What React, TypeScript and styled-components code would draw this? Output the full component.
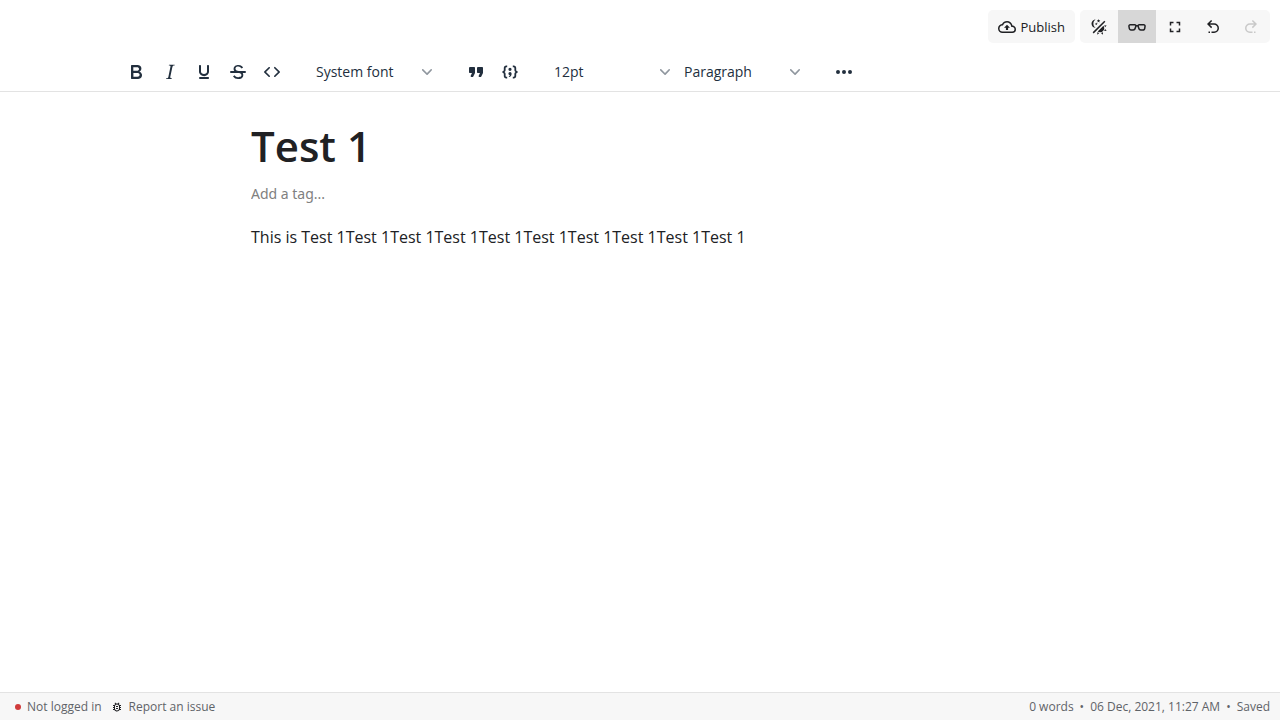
import React, { useState } from "react";
import styled, { createGlobalStyle } from "styled-components";

const GlobalStyle = createGlobalStyle`
  *, *::before, *::after { box-sizing: border-box; }
  body {
    margin: 0;
    background: #ffffff;
    color: #202124;
    font-family: "Open Sans", "Noto Sans", sans-serif;
  }
  button, input, select { font: inherit; color: inherit; margin: 0; }
`;

const paths = {
  cloudUpload:
    "M19.35,10.04C18.67,6.59 15.64,4 12,4C9.11,4 6.61,5.64 5.36,8.04C2.35,8.36 0,10.9 0,14A6,6 0 0,0 6,20H19A5,5 0 0,0 24,15C24,12.36 21.95,10.22 19.35,10.04M19,18H6A4,4 0 0,1 2,14C2,11.95 3.53,10.24 5.56,10.03L6.63,9.92L7.13,8.97C8.08,7.14 9.94,6 12,6C14.62,6 16.88,7.86 17.39,10.43L17.69,11.93L19.22,12.04C20.78,12.14 22,13.45 22,15A3,3 0 0,1 19,18M8,13H10.55V16H13.45V13H16L12,9L8,13Z",
  theme:
    "M7.5,2C5.71,3.15 4.5,5.18 4.5,7.5C4.5,9.82 5.71,11.85 7.53,13C4.46,13 2,10.54 2,7.5A5.5,5.5 0 0,1 7.5,2M19.07,3.5L20.5,4.93L4.93,20.5L3.5,19.07L19.07,3.5M12.89,5.93L11.41,5L9.97,6L10.39,4.3L9,3.24L10.75,3.12L11.33,1.47L12,3.1L13.73,3.13L12.38,4.26L12.89,5.93M9.59,9.54L8.43,8.81L7.31,9.59L7.65,8.27L6.56,7.44L7.92,7.35L8.37,6.06L8.88,7.33L10.24,7.36L9.19,8.23L9.59,9.54M19,13.5A5.5,5.5 0 0,1 13.5,19C12.28,19 11.15,18.6 10.24,17.93L17.93,10.24C18.6,11.15 19,12.28 19,13.5M14.6,20.08L17.37,18.93L17.13,22.28L14.6,20.08M18.93,17.38L20.08,14.61L22.28,17.15L18.93,17.38M20.08,12.42L18.94,9.64L22.28,9.88L20.08,12.42M9.63,18.93L12.4,20.08L9.87,22.27L9.63,18.93Z",
  glasses:
    "M3,10C2.76,10 2.55,10.09 2.41,10.25C2.27,10.4 2.21,10.62 2.24,10.86L2.74,13.85C2.82,14.5 3.4,15 4,15H7C7.64,15 8.36,14.44 8.5,13.82L9.56,10.63C9.6,10.5 9.57,10.31 9.5,10.19C9.39,10.07 9.22,10 9,10H3M7,17H4C2.38,17 0.96,15.74 0.76,14.14L0.26,11.15C0.15,10.3 0.39,9.5 0.91,8.92C1.43,8.34 2.19,8 3,8H9C9.83,8 10.58,8.35 11.06,8.96C11.17,9.11 11.27,9.27 11.35,9.45C11.78,9.36 12.22,9.36 12.64,9.45C12.72,9.27 12.82,9.11 12.94,8.96C13.41,8.35 14.16,8 15,8H21C21.81,8 22.57,8.34 23.09,8.92C23.6,9.5 23.84,10.3 23.74,11.11L23.23,14.18C23.04,15.74 21.61,17 20,17H17C15.44,17 13.92,15.81 13.54,14.3L12.64,11.59C12.26,11.31 11.73,11.31 11.35,11.59L10.43,14.37C10.07,15.82 8.56,17 7,17M15,10C14.78,10 14.61,10.07 14.5,10.19C14.42,10.31 14.4,10.5 14.45,10.7L15.46,13.75C15.64,14.44 16.36,15 17,15H20C20.59,15 21.18,14.5 21.25,13.89L21.76,10.82C21.79,10.62 21.73,10.4 21.59,10.25C21.45,10.09 21.24,10 21,10H15Z",
  fullscreen:
    "M5,5H10V7H7V10H5V5M14,5H19V10H17V7H14V5M17,14H19V19H14V17H17V14M10,17V19H5V14H7V17H10Z",
  undo:
    "M13.5,7A6.5,6.5 0 0,1 20,13.5A6.5,6.5 0 0,1 13.5,20H10V18H13.5C16,18 18,16 18,13.5C18,11 16,9 13.5,9H7.83L10.91,12.09L9.5,13.5L4,8L9.5,2.5L10.92,3.91L7.83,7H13.5M6,18H8V20H6V18Z",
  redo:
    "M10.5,7A6.5,6.5 0 0,0 4,13.5A6.5,6.5 0 0,0 10.5,20H14V18H10.5C8,18 6,16 6,13.5C6,11 8,9 10.5,9H16.17L13.09,12.09L14.5,13.5L20,8L14.5,2.5L13.08,3.91L16.17,7H10.5M18,18H16V20H18V18Z",
  bug:
    "M20 8H17.19C16.74 7.2 16.12 6.5 15.37 6L17 4.41L15.59 3L13.42 5.17C12.96 5.06 12.49 5 12 5S11.05 5.06 10.59 5.17L8.41 3L7 4.41L8.62 6C7.87 6.5 7.26 7.21 6.81 8H4V10H6.09C6.03 10.33 6 10.66 6 11V12H4V14H6V15C6 15.34 6.03 15.67 6.09 16H4V18H6.81C8.47 20.87 12.14 21.84 15 20.18C15.91 19.66 16.67 18.9 17.19 18H20V16H17.91C17.97 15.67 18 15.34 18 15V14H20V12H18V11C18 10.66 17.97 10.33 17.91 10H20V8M16 15C16 17.21 14.21 19 12 19S8 17.21 8 15V11C8 8.79 9.79 7 12 7S16 8.79 16 11V15M14 10V12H10V10H14M10 14H14V16H10V14Z",
  bold:
    "M7.8 19c-.3 0-.5 0-.6-.2l-.2-.5V5.7c0-.2 0-.4.2-.5l.6-.2h5c1.5 0 2.7.3 3.5 1 .7.6 1.1 1.4 1.1 2.5a3 3 0 01-.6 1.9c-.4.6-1 1-1.6 1.2.4.1.9.3 1.3.6s.8.7 1 1.2c.4.4.5 1 .5 1.6 0 1.3-.4 2.3-1.3 3-.8.7-2.1 1-3.8 1H7.8zm5-8.3c.6 0 1.2-.1 1.6-.5.4-.3.6-.7.6-1.3 0-1.1-.8-1.7-2.3-1.7H9.3v3.5h3.4zm.5 6c.7 0 1.3-.1 1.7-.4.4-.4.6-.9.6-1.5s-.2-1-.7-1.4c-.4-.3-1-.4-2-.4H9.4v3.8h4z",
  italic:
    "M16.7 4.7l-.1.9h-.3c-.6 0-1 0-1.4.3-.3.3-.4.6-.5 1.1l-2.1 9.8v.6c0 .5.4.8 1.4.8h.2l-.2.8H8l.2-.8h.2c1.1 0 1.8-.5 2-1.5l2-9.8.1-.5c0-.6-.4-.8-1.4-.8h-.3l.2-.9h5.8z",
  underline:
    "M16 5c.6 0 1 .4 1 1v5.5a4 4 0 01-.4 1.8l-1 1.4a5.3 5.3 0 01-5.5 1 5 5 0 01-1.6-1c-.5-.4-.8-.9-1.1-1.4a4 4 0 01-.4-1.8V6c0-.6.4-1 1-1s1 .4 1 1v5.5c0 .3 0 .6.2 1l.6.7a3.3 3.3 0 002.2.8 3.4 3.4 0 002.2-.8c.3-.2.4-.5.6-.8l.2-.9V6c0-.6.4-1 1-1zM8 17h8c.6 0 1 .4 1 1s-.4 1-1 1H8a1 1 0 010-2z",
  strike:
    "M15.6 8.5c-.5-.7-1-1.1-1.3-1.3-.6-.4-1.3-.6-2-.6-2.7 0-2.8 1.7-2.8 2.1 0 1.6 1.8 2 3.2 2.3 4.4.9 4.6 2.8 4.6 3.9 0 1.4-.7 4.1-5 4.1A6.2 6.2 0 017 16.4l1.5-1.1c.4.6 1.6 2 3.7 2 1.6 0 2.5-.4 3-1.2.4-.8.3-2-.8-2.6-.7-.4-1.6-.7-2.9-1-1-.2-3.9-.8-3.9-3.6C7.6 6 10.3 5 12.4 5c2.9 0 4.2 1.6 4.7 2.4l-1.5 1.1zM5 11h14a1 1 0 010 2H5a1 1 0 010-2z",
  code:
    "M9.8 15.7c.3.3.3.8 0 1-.3.4-.9.4-1.2 0l-4.4-4.1a.8.8 0 010-1.2l4.4-4.2c.3-.3.9-.3 1.2 0 .3.3.3.8 0 1.1L6 12l3.8 3.7zM14.2 15.7c-.3.3-.3.8 0 1 .4.4.9.4 1.2 0l4.4-4.1c.3-.3.3-.9 0-1.2l-4.4-4.2a.8.8 0 00-1.2 0c-.3.3-.3.8 0 1.1L18 12l-3.8 3.7z",
  quote:
    "M7.5 17h.9c.4 0 .7-.2.9-.6L11 13V8c0-.6-.4-1-1-1H6a1 1 0 00-1 1v4c0 .6.4 1 1 1h2l-1.3 2.7a1 1 0 00.8 1.3zm8 0h.9c.4 0 .7-.2.9-.6L19 13V8c0-.6-.4-1-1-1h-4a1 1 0 00-1 1v4c0 .6.4 1 1 1h2l-1.3 2.7a1 1 0 00.8 1.3z",
  codeBlock:
    "M9.2 5.5v1.7h-.6c-.7 0-1 .4-1 1v2c0 .8-.4 1.4-1.1 1.8.7.4 1.1 1 1.1 1.8v2c0 .6.3 1 1 1h.6v1.7h-.9c-1.5 0-2.5-1-2.5-2.5v-2c0-.7-.4-1.1-1.3-1.1v-1.8c.9 0 1.3-.4 1.3-1.1V8c0-1.5 1-2.5 2.5-2.5zM14.8 5.5v1.7h.6c.7 0 1 .4 1 1v2c0 .8.4 1.4 1.1 1.8-.7.4-1.1 1-1.1 1.8v2c0 .6-.3 1-1 1h-.6v1.7h.9c1.5 0 2.5-1 2.5-2.5v-2c0-.7.4-1.1 1.3-1.1v-1.8c-.9 0-1.3-.4-1.3-1.1V8c0-1.5-1-2.5-2.5-2.5zM12 7.7a1.6 1.6 0 110 3.2 1.6 1.6 0 010-3.2zM12 12a1.6 1.6 0 011.6 1.7c0 1.9-.9 3.1-2.7 3.3v-1c.6-.1 1-.4 1.1-.8a1.6 1.6 0 010-3.2z",
  more:
    "M6 10a2 2 0 100 4 2 2 0 000-4zm12 0a2 2 0 100 4 2 2 0 000-4zm-6 0a2 2 0 100 4 2 2 0 000-4z",
};

type IconName = keyof typeof paths;

const Svg = styled.svg`
  display: block;
  flex: none;
  fill: currentColor;
`;

function Icon({ name, size }: { name: IconName; size: number }) {
  return (
    <Svg width={size} height={size} viewBox="0 0 24 24" aria-hidden="true">
      <path d={paths[name]} fillRule={name === "bold" ? "evenodd" : "nonzero"} />
    </Svg>
  );
}

const Page = styled.div`
  display: flex;
  flex-direction: column;
  min-height: 100vh;
`;

const TopBar = styled.header`
  display: flex;
  justify-content: flex-end;
  gap: 5px;
  padding: 10px;
`;

const PublishButton = styled.button`
  display: flex;
  align-items: center;
  gap: 5px;
  height: 33px;
  padding: 0 10px;
  border: 0;
  border-radius: 5px;
  background: #f7f7f7;
  font-size: 13px;
  line-height: 18px;
`;

const ActionGroup = styled.div`
  display: flex;
  overflow: hidden;
  border-radius: 5px;
  background: #f7f7f7;
`;

const ActionButton = styled.button<{ $active?: boolean }>`
  display: grid;
  place-items: center;
  width: 38px;
  height: 33px;
  padding: 0;
  border: 0;
  background: ${(p) => (p.$active ? "#d7d7d7" : "transparent")};
  &:disabled { color: #c9c9c9; }
`;

const Toolbar = styled.div`
  display: flex;
  flex-wrap: wrap;
  gap: 0 20px;
  padding: 0 20px 1px 119px;
  border-bottom: 1px solid #e3e3e3;
  color: #222f3e;
`;

const ToolGroup = styled.div`
  display: flex;
  align-items: center;
  height: 37px;
`;

const ToolButton = styled.button`
  display: grid;
  place-items: center;
  width: 34px;
  height: 34px;
  padding: 0;
  border: 0;
  background: transparent;
`;

const SelectBox = styled.div`
  display: grid;
  grid-template-columns: 1fr 24px;
  align-items: center;
  width: 130px;
`;

const SelectField = styled.select`
  grid-area: 1 / 1 / 2 / 3;
  width: 100%;
  height: 34px;
  padding: 0 24px 0 7px;
  appearance: none;
  border: 0;
  background: transparent;
  font-size: 14px;
`;

const Chevron = styled.svg`
  grid-area: 1 / 2;
  justify-self: center;
  fill: #90979f;
  pointer-events: none;
`;

const Editor = styled.main`
  flex: 1;
  width: 100%;
  max-width: 798px;
  margin: 0 auto;
  padding: 23px 10px;
`;

const TitleInput = styled.input`
  display: block;
  width: 100%;
  height: 60px;
  padding: 0;
  border: 0;
  outline: 0;
  background: transparent;
  font-size: 42px;
  font-weight: 600;
`;

const TagInput = styled.input`
  display: block;
  width: 100%;
  height: 20px;
  margin-top: 8px;
  padding: 0;
  border: 0;
  outline: 0;
  background: transparent;
  font-family: "Noto Sans", "Open Sans", sans-serif;
  font-size: 14px;
  &::placeholder { color: #808080; opacity: 1; }
`;

const Note = styled.div`
  margin-top: 22px;
  outline: 0;
  font-size: 16px;
  line-height: 24px;
  p { margin: 0; }
`;

const StatusBar = styled.footer`
  display: flex;
  justify-content: space-between;
  align-items: center;
  height: 28px;
  padding: 0 10px 0 15px;
  border-top: 1px solid #e3e3e3;
  background: #f7f7f7;
  color: #5f6368;
  font-size: 12px;
  line-height: 16px;
`;

const StatusGroup = styled.div<{ $gap: number }>`
  display: flex;
  align-items: center;
  gap: ${(p) => p.$gap}px;
`;

const StatusButton = styled.button`
  display: flex;
  align-items: center;
  gap: 6px;
  padding: 0;
  border: 0;
  background: transparent;
  svg { color: #202124; }
`;

const Dot = styled.span`
  width: 6px;
  height: 6px;
  border-radius: 50%;
  background: #d03b3b;
`;

function ToolSelect({ label, options }: { label: string; options: string[] }) {
  return (
    <SelectBox>
      <SelectField aria-label={label}>
        {options.map((option) => (
          <option key={option}>{option}</option>
        ))}
      </SelectField>
      <Chevron width="10" height="10" viewBox="0 0 10 10" aria-hidden="true">
        <path d="M8.7 2.2c.3-.3.8-.3 1 0 .4.4.4.9 0 1.2L5.7 7.8c-.3.3-.9.3-1.2 0L.2 3.4a.8.8 0 010-1.2c.3-.3.8-.3 1.1 0L5 6l3.7-3.8z" />
      </Chevron>
    </SelectBox>
  );
}

const formatTools: [IconName, string][] = [
  ["bold", "Bold"],
  ["italic", "Italic"],
  ["underline", "Underline"],
  ["strike", "Strikethrough"],
  ["code", "Inline code"],
];

const blockTools: [IconName, string][] = [
  ["quote", "Blockquote"],
  ["codeBlock", "Code block"],
];

function Tools({ items }: { items: [IconName, string][] }) {
  return (
    <ToolGroup>
      {items.map(([name, label]) => (
        <ToolButton key={name} type="button" aria-label={label}>
          <Icon name={name} size={24} />
        </ToolButton>
      ))}
    </ToolGroup>
  );
}

export default function App() {
  const [title, setTitle] = useState("Test 1");
  const [focusMode, setFocusMode] = useState(true);

  return (
    <Page>
      <GlobalStyle />
      <TopBar>
        <PublishButton type="button">
          <Icon name="cloudUpload" size={18} />
          Publish
        </PublishButton>
        <ActionGroup>
          <ActionButton type="button" aria-label="Toggle theme">
            <Icon name="theme" size={18} />
          </ActionButton>
          <ActionButton
            type="button"
            aria-label="Focus mode"
            aria-pressed={focusMode}
            $active={focusMode}
            onClick={() => setFocusMode(!focusMode)}
          >
            <Icon name="glasses" size={18} />
          </ActionButton>
          <ActionButton type="button" aria-label="Full screen">
            <Icon name="fullscreen" size={18} />
          </ActionButton>
          <ActionButton type="button" aria-label="Undo">
            <Icon name="undo" size={18} />
          </ActionButton>
          <ActionButton type="button" aria-label="Redo" disabled>
            <Icon name="redo" size={18} />
          </ActionButton>
        </ActionGroup>
      </TopBar>

      <Toolbar role="toolbar" aria-label="Formatting">
        <Tools items={formatTools} />
        <ToolGroup>
          <ToolSelect label="Font" options={["System font", "Serif", "Monospace"]} />
        </ToolGroup>
        <Tools items={blockTools} />
        <ToolGroup>
          <ToolSelect label="Font size" options={["12pt", "14pt", "18pt"]} />
          <ToolSelect label="Block style" options={["Paragraph", "Heading 2", "Heading 3"]} />
        </ToolGroup>
        <Tools items={[["more", "More"]]} />
      </Toolbar>

      <Editor>
        <TitleInput
          aria-label="Note title"
          value={title}
          onChange={(e) => setTitle(e.target.value)}
        />
        <TagInput aria-label="Tags" placeholder="Add a tag..." />
        <Note contentEditable suppressContentEditableWarning spellCheck={false} role="textbox" aria-label="Note">
          <p>This is Test 1Test 1Test 1Test 1Test 1Test 1Test 1Test 1Test 1Test 1</p>
        </Note>
      </Editor>

      <StatusBar>
        <StatusGroup $gap={9}>
          <StatusButton type="button">
            <Dot />
            Not logged in
          </StatusButton>
          <StatusButton type="button">
            <Icon name="bug" size={12} />
            Report an issue
          </StatusButton>
        </StatusGroup>
        <StatusGroup $gap={6}>
          <span>0 words</span>
          <span>•</span>
          <span>06 Dec, 2021, 11:27 AM</span>
          <span>•</span>
          <span>Saved</span>
        </StatusGroup>
      </StatusBar>
    </Page>
  );
}
